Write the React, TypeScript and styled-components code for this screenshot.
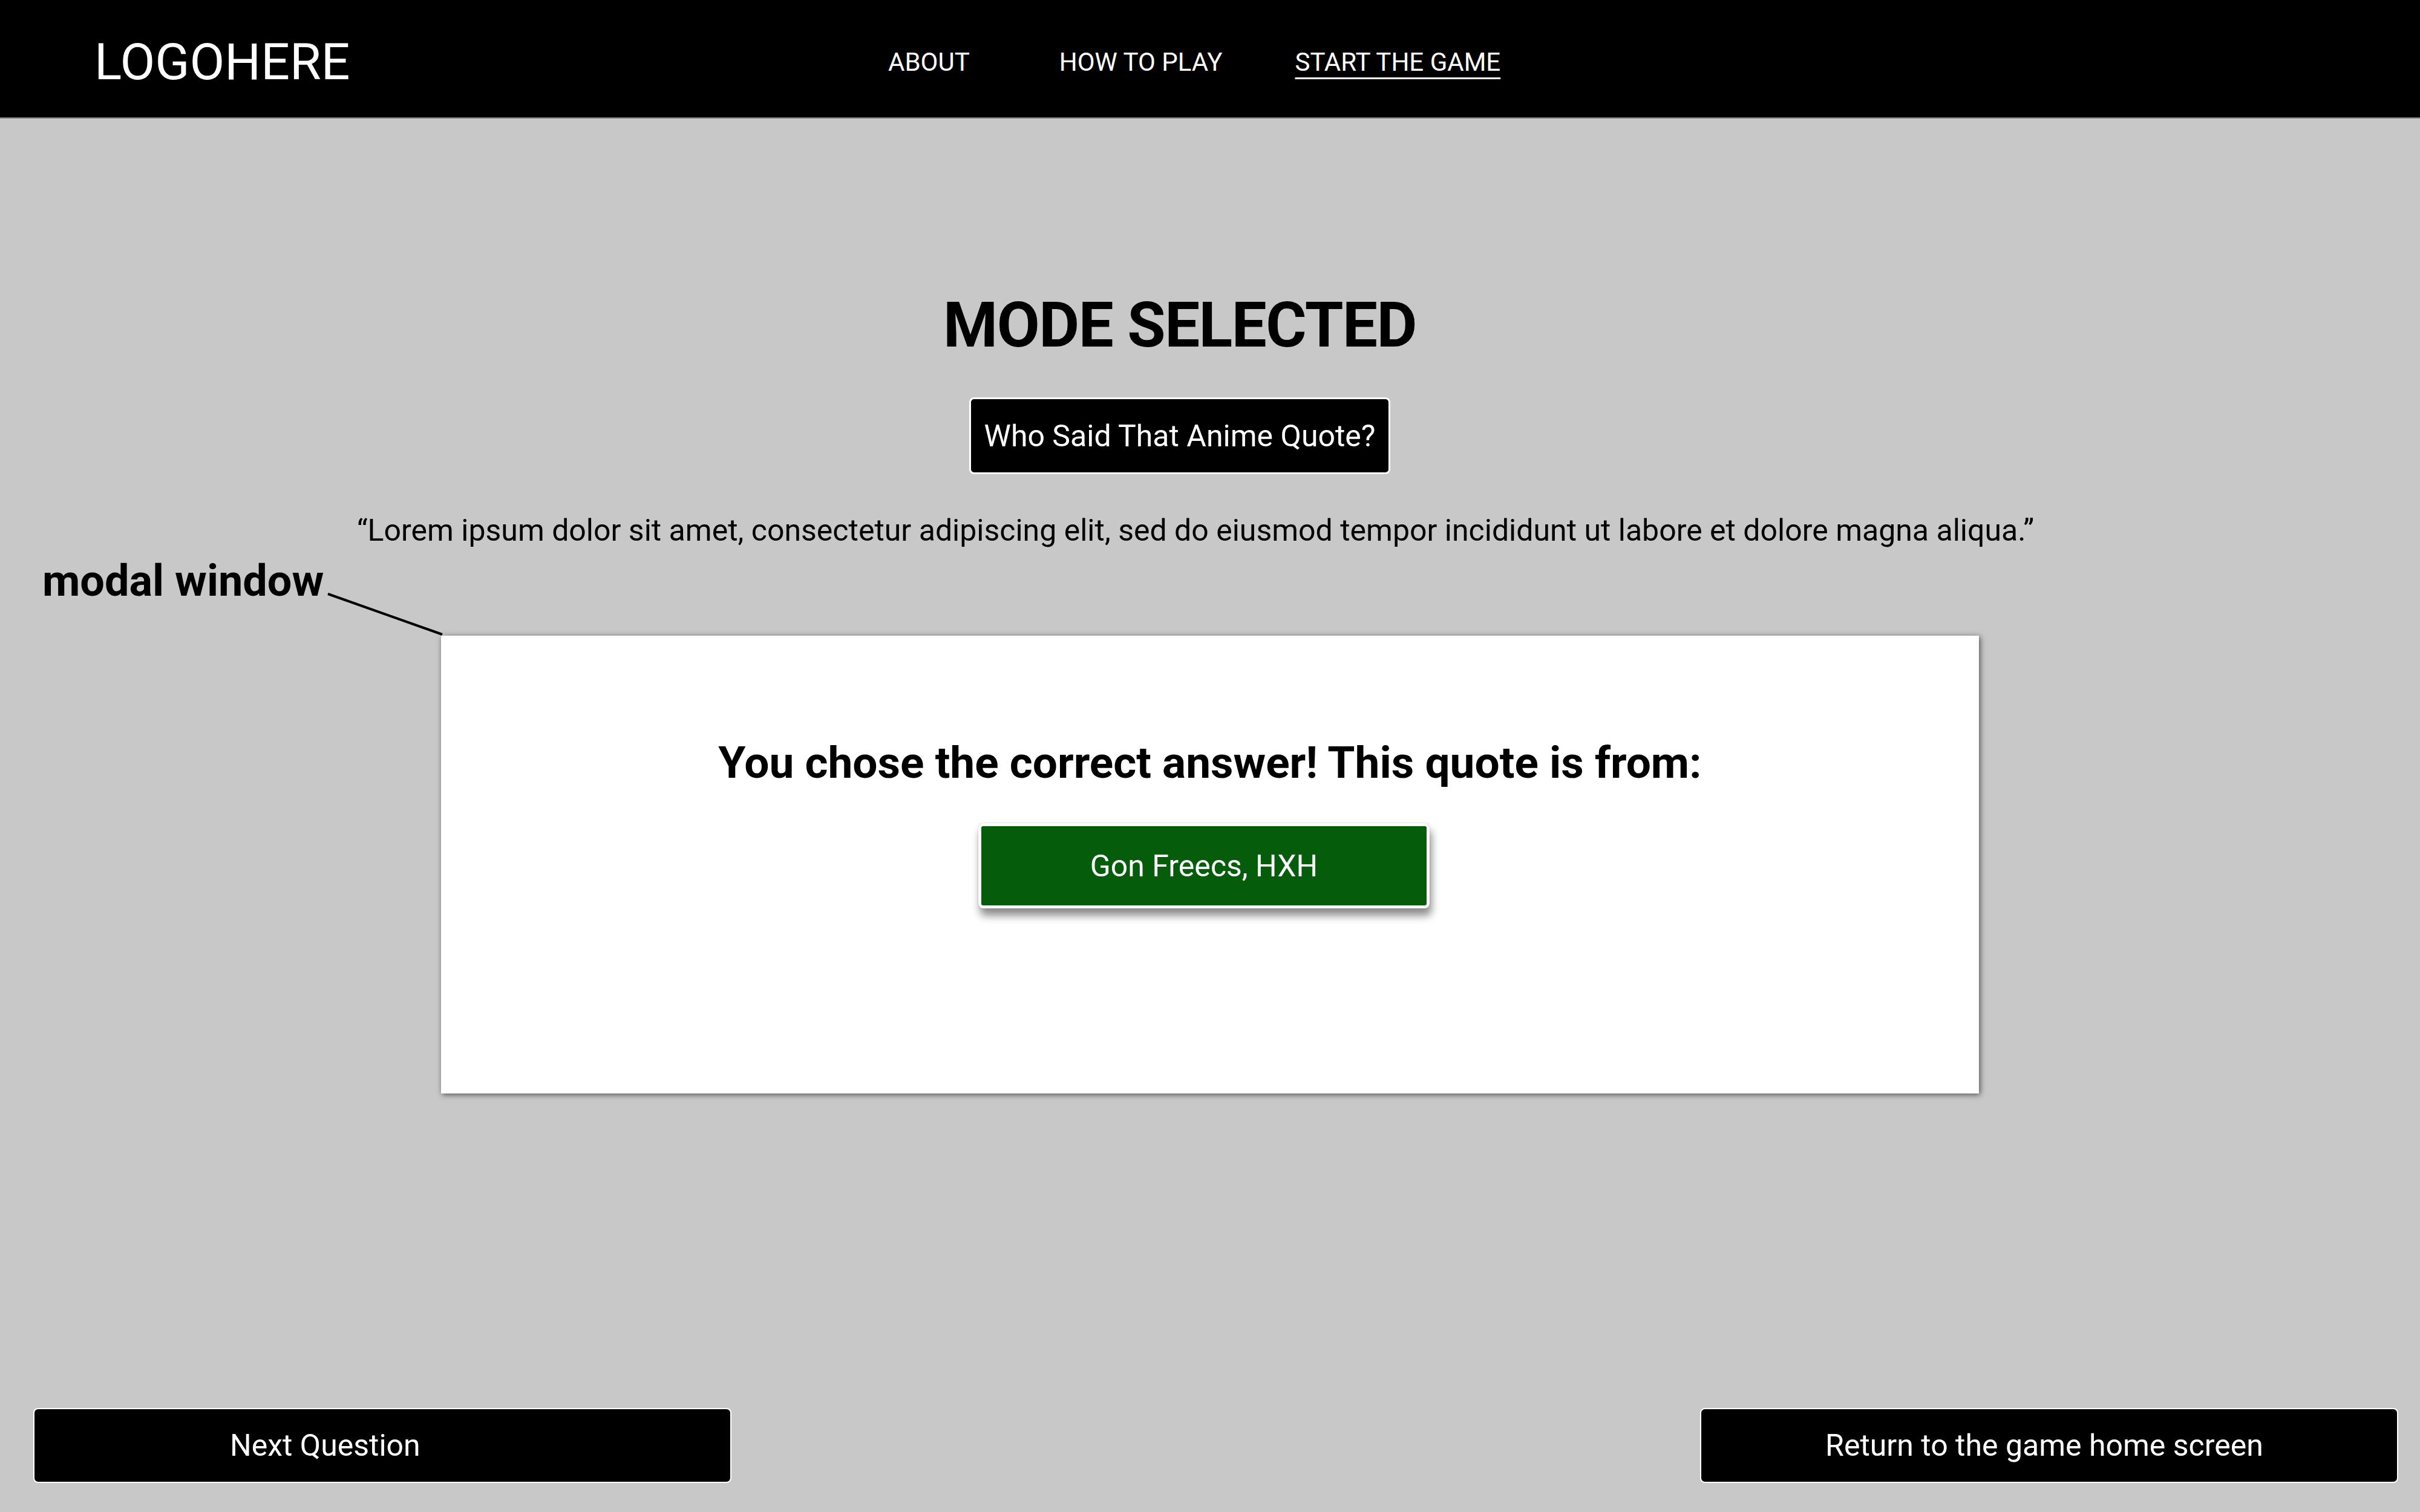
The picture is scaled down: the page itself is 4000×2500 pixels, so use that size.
import React from "react";
import styled, { createGlobalStyle } from "styled-components";

const Global = createGlobalStyle`
  html, body {
    margin: 0;
    padding: 0;
    background: #c8c8c8;
    font-family: Roboto, "Liberation Sans", Arial, sans-serif;
  }
  * { box-sizing: border-box; }
`;

const Page = styled.div`
  min-height: 2500px;
  display: flex;
  flex-direction: column;
  background: #c8c8c8;
`;

const Header = styled.header`
  height: 196px;
  background: #000;
  border-bottom: 2px solid #7a7a7a;
  display: flex;
  align-items: center;
  padding: 12px 0 0 156px;
`;

const Logo = styled.div`
  flex: 0 0 1312px;
  color: #fff;
  font-size: 84px;
  line-height: 1;
  font-weight: 400;
`;

const Nav = styled.nav`
  display: flex;
  align-items: center;
`;

const NavLink = styled.a<{ $space: number; $active?: boolean }>`
  color: #fff;
  font-size: 42px;
  line-height: 1;
  margin-right: ${(p) => p.$space}px;
  text-decoration: ${(p) => (p.$active ? "underline" : "none")};
  text-decoration-thickness: 3px;
  text-underline-offset: 11px;
`;

const Main = styled.main`
  display: flex;
  flex-direction: column;
  align-items: center;
`;

const Title = styled.h1`
  margin: 290px 100px 0 0;
  font-size: 103px;
  line-height: 1;
  font-weight: 700;
  letter-spacing: -1.5px;
  color: #000;
`;

const ModeBadge = styled.div`
  margin: 68px 100px 0 0;
  height: 127px;
  padding: 0 22px;
  display: flex;
  align-items: center;
  background: #000;
  color: #fff;
  border: 3px solid #fff;
  border-radius: 8px;
  font-size: 50px;
  line-height: 1;
`;

const Quote = styled.p`
  margin: 68px 48px 0 0;
  font-size: 50px;
  line-height: 1;
  color: #000;
`;

const ModalWrap = styled.div`
  position: relative;
  margin-top: 149px;
`;

const Modal = styled.section`
  width: 2542px;
  height: 757px;
  background: #fff;
  box-shadow: 2px 2px 9px rgba(0, 0, 0, 0.6);
  display: flex;
  flex-direction: column;
  align-items: center;
  padding-top: 174px;
`;

const ModalHeading = styled.h2`
  margin: 0;
  font-size: 73px;
  line-height: 1;
  font-weight: 700;
  color: #000;
`;

const AnswerButton = styled.button`
  margin: 63px 20px 0 0;
  width: 746px;
  height: 141px;
  background: #055c0a;
  color: #fff;
  border: 5px solid #fff;
  border-radius: 8px;
  box-shadow: 0 0 2px rgba(0, 0, 0, 0.3), 3px 12px 14px rgba(0, 0, 0, 0.45);
  font-family: Roboto, "Liberation Sans", Arial, sans-serif;
  font-size: 50px;
  line-height: 1;
`;

const Annotation = styled.div`
  position: absolute;
  left: -659px;
  top: -126px;
  width: 660px;
  height: 126px;
  pointer-events: none;
`;

const AnnotationLabel = styled.span`
  display: block;
  font-size: 72px;
  line-height: 1;
  font-weight: 700;
  color: #000;
`;

const Leader = styled.svg`
  position: absolute;
  left: 465px;
  top: 54px;
`;

const Footer = styled.footer`
  margin-top: auto;
  display: flex;
  justify-content: space-between;
  padding: 0 36px 48px 55px;
`;

const FooterButton = styled.button<{ $indent?: number }>`
  width: 1154px;
  height: 124px;
  background: #000;
  color: #fff;
  border: 2px solid #fff;
  border-radius: 8px;
  display: flex;
  align-items: center;
  justify-content: ${(p) => (p.$indent ? "flex-start" : "center")};
  padding: ${(p) => (p.$indent ? `0 0 0 ${p.$indent}px` : "0 16px 0 0")};
  font-family: Roboto, "Liberation Sans", Arial, sans-serif;
  font-size: 50px;
  line-height: 1;
`;

export default function App() {
  return (
    <>
      <Global />
      <Page>
        <Header>
          <Logo>LOGOHERE</Logo>
          <Nav>
            <NavLink $space={148}>ABOUT</NavLink>
            <NavLink $space={120}>HOW TO PLAY</NavLink>
            <NavLink $space={0} $active>
              START THE GAME
            </NavLink>
          </Nav>
        </Header>
        <Main>
          <Title>MODE SELECTED</Title>
          <ModeBadge>Who Said That Anime Quote?</ModeBadge>
          <Quote>
            “Lorem ipsum dolor sit amet, consectetur adipiscing elit, sed do eiusmod tempor incididunt ut
            labore et dolore magna aliqua.”
          </Quote>
          <ModalWrap>
            <Annotation>
              <AnnotationLabel>modal window</AnnotationLabel>
              <Leader width="200" height="80" viewBox="0 0 200 80">
                <line x1="7" y1="3" x2="196" y2="70" stroke="#000" strokeWidth="4" />
              </Leader>
            </Annotation>
            <Modal>
              <ModalHeading>You chose the correct answer! This quote is from:</ModalHeading>
              <AnswerButton>Gon Freecs, HXH</AnswerButton>
            </Modal>
          </ModalWrap>
        </Main>
        <Footer>
          <FooterButton $indent={323}>Next Question</FooterButton>
          <FooterButton>Return to the game home screen</FooterButton>
        </Footer>
      </Page>
    </>
  );
}
